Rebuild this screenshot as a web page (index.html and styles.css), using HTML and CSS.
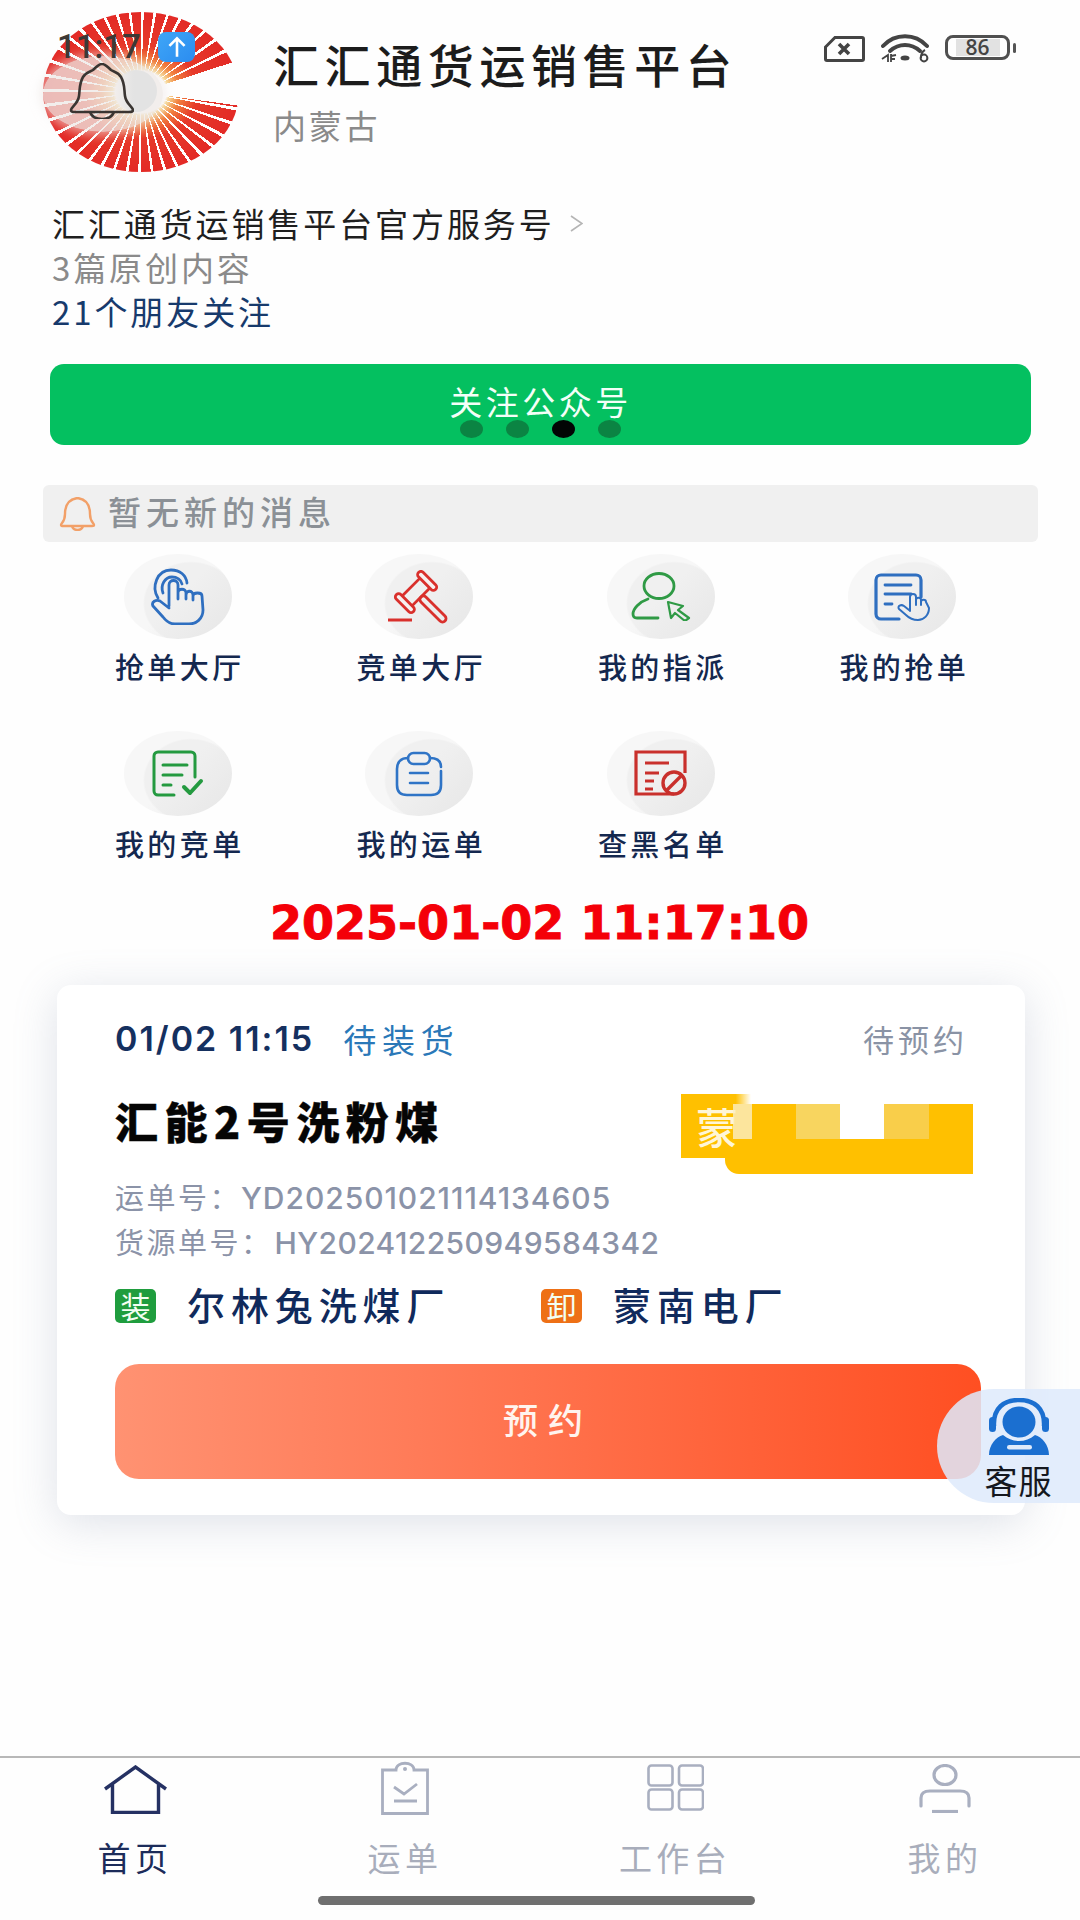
FILE: index.html
```html
<!DOCTYPE html>
<html lang="zh-CN">
<head>
<meta charset="utf-8">
<title>汇汇通货运销售平台</title>
<link rel="stylesheet" href="styles.css">
</head>
<body>
<div class="app">
  <div class="status">
    <span class="time">11:17</span>
    <span class="upload"><svg viewBox="0 0 24 24" width="26" height="26"><path d="M12 21V4M5 11l7-7 7 7" fill="none" stroke="#fff" stroke-width="2.400"/></svg></span>
    <div class="status-right">
      <svg class="sim" viewBox="0 0 41 26"><path d="M11 1.500H38a1.500 1.500 0 0 1 1.500 1.500V23a1.500 1.500 0 0 1-1.500 1.500H3A1.500 1.500 0 0 1 1.500 23V11z" fill="none" stroke="#444" stroke-width="3"/><path d="M15 8l10 10M25 8L15 18" stroke="#444" stroke-width="3.600"/></svg>
      <svg class="wifi" viewBox="0 0 48 29"><g fill="none" stroke="#444" stroke-linecap="round"><path d="M2 12C14 -1 34 -1 46 12" stroke-width="4"/><path d="M9 17c9-8 21-8 30 0" stroke-width="4"/></g><ellipse cx="24" cy="24" rx="4.500" ry="2.500" fill="#444"/><path d="M1 25l6-4v7M10 20v8M10 22l5-1M10 25h4" stroke="#444" stroke-width="1.800" fill="none"/><circle cx="43" cy="24" r="3.400" fill="none" stroke="#444" stroke-width="2"/><path d="M40 24c0-5 2-7 4-8" stroke="#444" stroke-width="2" fill="none"/></svg>
      <div class="battery"><span class="level">86</span></div>
      <span class="nub"></span>
    </div>
  </div>

  <header class="profile">
    <div class="logo">
      <span class="logo-veil"></span>
      <span class="logo-core"></span>
      <svg class="logo-bell" viewBox="0 0 65 56"><g fill="none" stroke="#3a3532" stroke-width="2.600" stroke-linejoin="round"><path d="M2 47c0-3 7-6 8-14 1-7 0-12 4-19 3-5 7-5 10-7 3-3 6-6 9-6s6 3 9 6c3 2 7 2 10 7 4 7 3 12 4 19 1 8 8 11 8 14 0 2-2 2-4 2H6c-2 0-4 0-4-2z"/><path d="M21 49c2 5 7 7 12 7s10-2 12-7"/></g></svg>
    </div>
    <div class="profile-text">
      <h1 class="name">汇汇通货运销售平台</h1>
      <p class="region">内蒙古</p>
    </div>
  </header>

  <section class="official">
    <p class="official-line">汇汇通货运销售平台官方服务号<svg class="chev" viewBox="0 0 13 17"><path d="M1 1l11 7.500L1 16" fill="none" stroke="#b5b5b5" stroke-width="1.600"/></svg></p>
    <p class="official-sub">3篇原创内容</p>
    <p class="official-friends">21个朋友关注</p>
  </section>

  <button class="follow">关注公众号
    <span class="dots"><i class="dot"></i><i class="dot"></i><i class="dot dot-on"></i><i class="dot"></i></span>
  </button>

  <div class="notice">
    <svg class="notice-bell" viewBox="0 0 37 34"><g fill="none" stroke="#f2a068" stroke-width="2.400" stroke-linejoin="round"><path d="M2 28c0-2 4-3 4-11C6 7 11 2 18.500 1 26 2 31 7 31 17c0 8 4 9 4 11 0 1-1 1-2 1H4c-1 0-2 0-2-1z"/><path d="M13 29c1 3 3 4 5.500 4s4.500-1 5.500-4"/></g></svg>
    <span class="notice-text">暂无新的消息</span>
  </div>

  <nav class="grid">
    <a class="item">
      <span class="disc"><svg class="ic ic-hand" viewBox="0 0 55 57"><g fill="none" stroke="#2f6fc0" stroke-width="2.800" stroke-linecap="round" stroke-linejoin="round"><path d="M8 30C1 19 7 2 21 2c9 0 15 5 16 13"/><path d="M13 25c-3-8 2-16 9-16 5 0 9 3 10 7"/><path d="M19 38V17c0-6 9-6 9 0v14M28 25c0-5 8-5 8 0v6M36 27c0-5 7-5 7 0v5M43 28c0-4 9-4 9 0l1 14c0 9-7 14-14 14H25c-6 0-9-3-12-7L3 38c-2-4 3-7 7-5l9 7"/></g></svg></span>
      <span class="label">抢单大厅</span>
    </a>
    <a class="item">
      <span class="disc"><svg class="ic ic-gavel" viewBox="0 0 65 54"><g transform="translate(29 22) rotate(45)" fill="none" stroke="#d9302c" stroke-width="2.800"><rect x="-7" y="-13" width="14" height="26"/><rect x="-12" y="-19" width="24" height="6.500" rx="3" fill="#f7f0f0"/><rect x="-12" y="12.500" width="24" height="6.500" rx="3" fill="#f7f0f0"/><rect x="7" y="-3.500" width="34" height="7" rx="3.500"/></g><path d="M1 50h24" stroke="#d9302c" stroke-width="3"/></svg></span>
      <span class="label">竞单大厅</span>
    </a>
    <a class="item">
      <span class="disc"><svg class="ic ic-user" viewBox="0 0 60 49"><g fill="none" stroke="#2f9a45" stroke-linejoin="round" stroke-linecap="round"><ellipse cx="28" cy="14" rx="15" ry="12.500" stroke-width="2.800"/><path d="M17 27C8 30 2 37 2 42c0 3 2 4 4 4h21" stroke-width="2.800"/><path d="M37 30l15 4-5 4 11 8-4 3-10-8-4 5z" stroke-width="2.200"/></g></svg></span>
      <span class="label">我的指派</span>
    </a>
    <a class="item">
      <span class="disc"><svg class="ic ic-dochand" viewBox="0 0 57 48"><g fill="none" stroke="#2f6fc0" stroke-linecap="round" stroke-linejoin="round"><path d="M25 46H7a5 5 0 0 1-5-5V7a5 5 0 0 1 5-5h35a5 5 0 0 1 5 5v17" stroke-width="3.200"/><path d="M11 12h26M11 21h26M11 31h7" stroke-width="2.800"/><path d="M36 38V24c0-4 6-4 6 0v8M42 27c0-3 5-3 5 0v5M47 29c0-3 5-3 5 0l3 6c0 7-5 12-11 12-5 0-8-1-12-5l-7-6c-2-3 2-5 5-3l5 4" stroke-width="2"/></g></svg></span>
      <span class="label">我的抢单</span>
    </a>
    <a class="item">
      <span class="disc"><svg class="ic ic-doccheck" viewBox="0 0 52 47"><g fill="none" stroke="#249a40" stroke-linecap="round" stroke-linejoin="round"><path d="M22 45H6a4 4 0 0 1-4-4V6a4 4 0 0 1 4-4h33a4 4 0 0 1 4 4v21" stroke-width="3"/><path d="M11 15h24M11 25h19M11 35h8" stroke-width="3"/><path d="M32 37l6 6 11-12" stroke-width="4"/></g></svg></span>
      <span class="label">我的竞单</span>
    </a>
    <a class="item">
      <span class="disc"><svg class="ic ic-clip" viewBox="0 0 48 46"><g fill="none" stroke="#2f74c6" stroke-width="2.600" stroke-linecap="round"><rect x="13" y="2" width="22" height="11" rx="5.500"/><path d="M13 7C6 7 2 11 2 18v16c0 7 4 10 10 10h24c6 0 10-3 10-10V20M46 16c0-6-4-9-11-9"/><path d="M15 22h18M15 32h18"/></g></svg></span>
      <span class="label">我的运单</span>
    </a>
    <a class="item">
      <span class="disc"><svg class="ic ic-black" viewBox="0 0 53 47"><g fill="none" stroke="#c9302c"><path d="M40 44H2V2h49v21" stroke-width="3.200"/><path d="M11 13h24M11 23h14M11 31h9M11 39h8" stroke-width="3"/><circle cx="40" cy="33" r="11" stroke-width="3.400"/><path d="M33 40l14-14" stroke-width="3.400"/></g></svg></span>
      <span class="label">查黑名单</span>
    </a>
  </nav>

  <div class="clock">2025-01-02 11:17:10</div>

  <article class="card">
    <div class="card-head">
      <span class="card-date">01/02 11:15</span>
      <span class="card-state">待装货</span>
      <span class="card-status">待预约</span>
    </div>
    <div class="card-main">
      <h2 class="cargo">汇能2号洗粉煤</h2>
      <div class="plate">
        <span class="plate-fill"></span>
        <span class="plate-tab">蒙</span>
        <span class="plate-mosaic"><i class="m m-cream"></i><i class="m"></i><i class="m m-pale"></i><i class="m m-white"></i><i class="m m-pale2"></i></span>
      </div>
    </div>
    <p class="ids">运单号：<span class="num">YD202501021114134605</span></p>
    <p class="ids">货源单号：<span class="num num-source">HY202412250949584342</span></p>
    <div class="route">
      <span class="tag tag-load">装</span><span class="place place-from">尔林兔洗煤厂</span>
      <span class="tag tag-unload">卸</span><span class="place">蒙南电厂</span>
    </div>
    <button class="reserve">预约</button>
  </article>

  <div class="spacer"></div>

  <footer class="tabs">
    <div class="tab-row">
      <a class="tab tab-on">
        <svg class="tab-ic ic-home" viewBox="0 0 63 49"><path d="M1 24L31.500 2 62 24M8.500 19v28.500h46V19" fill="none" stroke="#253163" stroke-width="3.400"/></svg>
        <span class="tab-text">首页</span>
      </a>
      <a class="tab">
        <svg class="tab-ic ic-bill" viewBox="0 0 48 54"><g fill="none" stroke="#a9afc0" stroke-width="2.800"><path d="M15 9H1.500v43.500h45V9H33c0-9-18-9-18 0z"/><path d="M13 26l10 7 13-10M13 40h23"/></g><circle cx="24" cy="8" r="2" fill="#a9afc0"/></svg>
        <span class="tab-text">运单</span>
      </a>
      <a class="tab">
        <svg class="tab-ic ic-board" viewBox="0 0 57 47"><g fill="none" stroke="#a9afc0" stroke-width="2.600"><rect x="1.500" y="1.500" width="24" height="20" rx="3"/><rect x="32" y="1.500" width="24" height="20" rx="3"/><rect x="1.500" y="25.500" width="24" height="20" rx="3"/><rect x="32" y="25.500" width="24" height="20" rx="3"/></g></svg>
        <span class="tab-text">工作台</span>
      </a>
      <a class="tab">
        <svg class="tab-ic ic-me" viewBox="0 0 52 49"><g fill="none" stroke="#a9afc0" stroke-width="3.200"><ellipse cx="26" cy="11" rx="11" ry="9.500"/><path d="M2 42v-8c0-5 4-7 9-7h30c5 0 9 2 9 7v8" stroke-linecap="round"/><path d="M13 47.500h26"/></g></svg>
        <span class="tab-text">我的</span>
      </a>
    </div>
    <div class="home-bar"></div>
  </footer>

  <aside class="service">
    <svg class="service-ic" viewBox="0 0 62 58"><path d="M6 28C5 10 16 2 31 2s26 8 25 26" fill="none" stroke="#1b6fd0" stroke-width="4.500"/><rect x="1" y="19" width="7" height="15" rx="3.500" fill="#1b6fd0"/><rect x="54" y="19" width="7" height="15" rx="3.500" fill="#1b6fd0"/><ellipse cx="31" cy="24" rx="16.500" ry="15.500" fill="#1b6fd0"/><path d="M1 57c0-10 7-18 14-20 5 4 10 6 16 6s11-2 16-6c7 2 14 10 14 20z" fill="#1b6fd0"/><rect x="19" y="47" width="25" height="4.500" rx="2.200" fill="#dfeafa"/></svg>
    <span class="service-text">客服</span>
  </aside>
</div>
</body>
</html>
```

FILE: styles.css
```css
* { box-sizing: border-box; }
html, body { margin: 0; padding: 0; }
body {
  width: 1080px;
  height: 1920px;
  overflow: hidden;
  background: #fff;
  font-family: "Noto Sans CJK SC", "Noto Sans", sans-serif;
}
h1, h2, p { margin: 0; font-weight: 400; }
i { font-style: normal; display: block; }
button { border: 0; font-family: inherit; padding: 0; display: block; }

.app {
  position: relative;
  width: 1080px;
  height: 1920px;
  display: flex;
  flex-direction: column;
  overflow: hidden;
  background: #fefefe;
}

/* status bar overlays the page */
.status { position: absolute; left: 0; top: 0; width: 1080px; height: 70px; z-index: 5; }
.time {
  position: absolute; left: 57px; top: 26px;
  font: 500 33px/42px Roboto, sans-serif;
  color: #3c3936;
}
.upload {
  position: absolute; left: 158px; top: 32px;
  width: 37px; height: 30px;
  border-radius: 8px;
  background: linear-gradient(135deg, #3fa6f7, #2b8cf0);
  display: flex; align-items: center; justify-content: center;
}
.status-right { position: absolute; left: 824px; top: 34px; display: flex; align-items: flex-start; }
.sim { width: 41px; height: 26px; margin-top: 2px; }
.wifi { width: 48px; height: 29px; margin-left: 16px; }
.battery {
  width: 65px; height: 25px; margin-left: 16px; margin-top: 1px;
  border: 3px solid #505050; border-radius: 8px;
  display: flex; align-items: center; justify-content: center;
}
.level {
  width: 44px; height: 17px;
  background: #e2e2e2;
  font: 600 21px/17px "Open Sans", sans-serif;
  color: #444; text-align: center;
}
.nub { width: 3px; height: 10px; margin-left: 3px; margin-top: 9px; background: #555; border-radius: 2px; }

/* header */
.profile { display: flex; align-items: flex-start; margin: 12px 0 0 43px; height: 160px; }
.logo {
  position: relative;
  flex: none;
  width: 196px; height: 160px;
  border-radius: 50%;
  background:
    conic-gradient(#0000 0 72deg, #fefefe 72deg 98deg, #0000 98deg),
    repeating-conic-gradient(#fff 0 2deg, #0000 2deg 9deg),
    radial-gradient(closest-side, #fefefe 0 26%, #f8d489 29%, #f1803f 40%, #e63a2a 58%, #e32a26 100%);
}
.logo-veil {
  position: absolute; left: 0; top: 44px;
  width: 120px; height: 76px;
  border-radius: 50%;
  background: rgba(238, 232, 230, .76);
  box-shadow: 0 0 10px 4px rgba(238, 232, 230, .55);
}
.logo-core {
  position: absolute; left: 72px; top: 58px;
  width: 42px; height: 42px;
  border-radius: 50%;
  background: linear-gradient(90deg, #e3e3e300, #e3e3e3 45%);
}
.logo-bell { position: absolute; left: 26px; top: 51px; width: 65px; height: 56px; }
.profile-text { margin-left: 34px; }
.name {
  margin-top: 27px;
  font-size: 46px; line-height: 48px;
  font-weight: 500;
  letter-spacing: 5.600px;
  color: #1c1c1c;
  white-space: nowrap;
}
.region {
  margin-top: 18px;
  font-size: 33px; line-height: 40px;
  letter-spacing: 2.700px;
  color: #8a8a8a;
}

/* official account */
.official { margin: 29px 0 0 52px; }
.official p { font-size: 33px; line-height: 44px; letter-spacing: 2.900px; white-space: nowrap; }
.official-line { color: #1f1f1f; display: flex; align-items: center; }
.chev { width: 13px; height: 17px; margin-left: 15px; }
.official-sub { color: #8a8a8a; }
.official-friends { color: #173a6c; }

/* follow button */
.follow {
  position: relative;
  margin: 31px 0 0 50px;
  width: 981px; height: 81px;
  padding-bottom: 7px;
  border-radius: 14px;
  background: #04c060;
  color: #f4fff8;
  font-size: 33px;
  letter-spacing: 3.500px;
  text-align: center;
}
.dots {
  position: absolute; left: 410px; top: 56px;
  display: flex; gap: 23px;
}
.dot { width: 23px; height: 18px; border-radius: 50%; background: #0b8443; }
.dot-on { background: #020504; }

/* notice */
.notice {
  margin: 40px 0 0 43px;
  width: 995px; height: 57px;
  border-radius: 6px;
  background: #f0f0f0;
  display: flex; align-items: center;
  padding-left: 16px;
  color: #8b9096;
  font-size: 33px; font-weight: 500;
  letter-spacing: 5px;
}
.notice-bell { width: 37px; height: 34px; margin-right: 12px; }
.notice-text { margin-top: -6px; }

/* shortcuts */
.grid {
  margin: 12px 0 0 57px;
  width: 966px;
  display: grid;
  grid-template-columns: repeat(4, 1fr);
  row-gap: 45px;
}
.item { display: flex; flex-direction: column; align-items: center; }
.disc {
  width: 108px; height: 85px;
  border-radius: 50%;
  display: flex; align-items: center; justify-content: center;
  background:
    linear-gradient(135deg, #fff0 50%, #d8d8d866 100%),
    radial-gradient(ellipse 48px 42px at 62% 58%, #f0f0f0 0 96%, #f0f0f000 100%),
    #f7f7f7;
}
.ic-hand { width: 55px; height: 57px; }
.ic-gavel { width: 65px; height: 54px; }
.ic-user { width: 60px; height: 49px; }
.ic-dochand { width: 57px; height: 48px; }
.ic-doccheck { width: 52px; height: 47px; }
.ic-clip { width: 48px; height: 46px; }
.ic-black { width: 53px; height: 47px; }
.label {
  margin-top: 7px;
  padding-left: 4px;
  font-size: 29px; line-height: 40px;
  font-weight: 500;
  letter-spacing: 3.400px;
  color: #14284f;
  white-space: nowrap;
}

/* clock */
.clock {
  margin-top: 30px;
  height: 60px;
  padding-left: 270px;
  font: 700 46px/60px "DejaVu Sans", sans-serif;
  color: #f40008;
  -webkit-text-stroke: .9px #f40008;
  white-space: nowrap;
}

/* waybill card */
.card {
  margin: 32px 0 0 57px;
  width: 968px;
  padding: 34px 44px 36px 58px;
  border-radius: 14px;
  background: #fff;
  box-shadow: 0 8px 44px rgba(120, 135, 165, .24);
}
.card-head { display: flex; align-items: center; height: 40px; }
.card-date { font: 600 34px/40px Inter, sans-serif; color: #15305f; letter-spacing: 2px; }
.card-state { margin-left: 29px; font-size: 33px; letter-spacing: 5.700px; color: #2a78b8; }
.card-status { margin-left: auto; margin-right: 13px; margin-bottom: 2px; font-size: 31px; letter-spacing: 4px; color: #8a93a5; }
.card-main { display: flex; justify-content: space-between; margin-top: 35px; height: 80px; }
.cargo {
  font-size: 43px; line-height: 52px;
  font-weight: 900;
  letter-spacing: 6.500px;
  color: #050505;
  -webkit-text-stroke: .4px #050505;
}
.plate { position: relative; width: 292px; height: 80px; margin-right: 8px; }
.plate-fill {
  position: absolute; left: 44px; top: 10px;
  width: 248px; height: 70px;
  background: #ffc000;
  border-radius: 0 0 0 14px;
}
.plate-tab {
  position: absolute; left: 0; top: 0;
  width: 70px; height: 64px;
  padding-left: 15px;
  background: linear-gradient(90deg, #ffc000 78%, #ffc00000);
  color: #fff6d8;
  font-size: 42px; line-height: 64px;
  font-weight: 500;
}
.plate-mosaic { position: absolute; left: 52px; top: 10px; display: flex; height: 35px; }
.m { width: 44px; height: 35px; }
.m-cream { width: 19px; background: #fbeec4cc; }
.m-pale { background: #f8d55f; }
.m-white { background: #fff; }
.m-pale2 { width: 45px; background: #f9ce4a; }
.ids {
  margin-top: 2px;
  font-size: 29px; line-height: 41px;
  letter-spacing: 2.500px;
  color: #8b93a8;
  white-space: nowrap;
}
.num { font-family: Inter, sans-serif; font-weight: 500; font-size: 30px; letter-spacing: .95px; }
.num-source { letter-spacing: .4px; margin-left: 2px; }
.route { display: flex; align-items: center; margin-top: 25px; height: 34px; }
.tag {
  width: 41px; height: 34px;
  border-radius: 5px;
  color: #f3fff2;
  font-size: 30px; line-height: 33px;
  text-align: center;
}
.tag-load { background: #1f9d3e; }
.tag-unload { background: #ee7016; }
.place {
  margin-left: 31px;
  margin-bottom: 4px;
  font-size: 38px; line-height: 44px;
  font-weight: 500;
  letter-spacing: 5.900px;
  color: #102a5c;
  white-space: nowrap;
}
.place-from { width: 354px; }
.reserve {
  margin-top: 41px;
  width: 866px; height: 115px;
  padding-bottom: 6px;
  border-radius: 24px;
  background: linear-gradient(90deg, #ff9272 0%, #ff7b58 35%, #ff4f22 100%);
  color: #fff4ee;
  font-size: 35px; font-weight: 500;
  letter-spacing: 10px;
  text-align: center;
}

.spacer { flex: 1; }

/* tab bar */
.tabs { height: 164px; border-top: 2px solid #b8b8b8; }
.tab-row { display: grid; grid-template-columns: repeat(4, 270px); }
.tab {
  display: flex; flex-direction: column; align-items: center;
  color: #a8adbb;
  font-size: 33px; line-height: 44px;
  letter-spacing: 4.400px;
}
.tab-on { color: #1c2c5a; }
.ic-home { width: 63px; height: 49px; margin: 7px 0 4px; }
.ic-bill { width: 48px; height: 54px; margin: 3px 0 3px; }
.ic-board { width: 57px; height: 47px; margin: 6px 0 7px; }
.ic-me { width: 52px; height: 49px; margin: 6px 0 5px; }
.tab-text { margin-top: 17px; }
.home-bar { width: 437px; height: 9px; margin: 17px 0 0 318px; border-radius: 5px; background: #6f6f6f; }

/* floating service button */
.service {
  position: absolute; left: 937px; top: 1389px;
  width: 143px; height: 114px;
  border-radius: 60px 0 0 60px;
  background: rgba(222, 234, 252, .86);
  display: flex; flex-direction: column; align-items: center;
  padding: 9px 0 0 20px;
}
.service-ic { width: 62px; height: 58px; }
.service-text { margin-top: 2px; font-size: 33px; line-height: 44px; color: #15181f; letter-spacing: 1px; }
```
